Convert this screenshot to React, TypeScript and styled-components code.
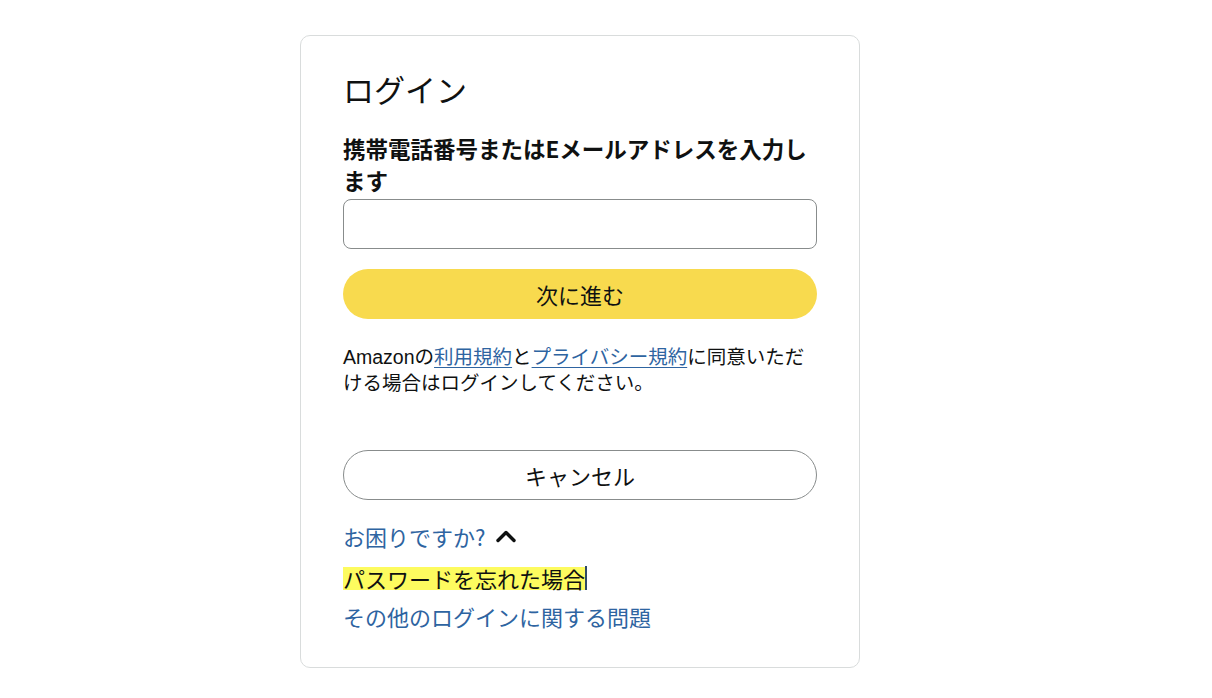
import * as React from "react";
import styled, { createGlobalStyle } from "styled-components";

const GlobalStyle = createGlobalStyle`
    * {
        box-sizing: border-box;
    }

    body {
        margin: 0;
        background: #ffffff;
        color: #0f1111;
        font-family: "Liberation Sans", "Noto Sans CJK JP", sans-serif;
    }
`;

const ChevronUp = (): JSX.Element => (
    <svg width="22" height="14" viewBox="0 0 22 14" fill="none">
        <polyline points="3,11.5 11,3.5 19,11.5" stroke="#0f1111" strokeWidth="3.4" strokeLinecap="round" strokeLinejoin="round"/>
    </svg>
);

const App = (): JSX.Element => (
    <Page>
        <GlobalStyle/>
        <Card>
            <Title>ログイン</Title>
            <Label htmlFor="email">携帯電話番号またはEメールアドレスを入力します</Label>
            <Input id="email" type="text"/>
            <PillButton $primary>次に進む</PillButton>
            <Legal>
                Amazonの<TextLink href="#">利用規約</TextLink>と<TextLink href="#">プライバシー規約</TextLink>に同意いただける場合はログインしてください。
            </Legal>
            <PillButton $spaced>キャンセル</PillButton>
            <Help>
                <HelpToggle>
                    お困りですか?
                    <ChevronUp/>
                </HelpToggle>
                <HelpItem>
                    <Marked>パスワードを忘れた場合</Marked>
                    <Caret/>
                </HelpItem>
                <HelpItem>
                    <HelpLink href="#">その他のログインに関する問題</HelpLink>
                </HelpItem>
            </Help>
        </Card>
    </Page>
);

export default App;


const Page = styled.div`
    padding: 35px 0 0 300px;
    min-height: 698px;
`;

const Card = styled.div`
    width: 560px;
    border: 1px solid #d9dcdc;
    border-radius: 10px;
    padding: 35px 42px 36px;
    display: flex;
    flex-direction: column;
`;

const Title = styled.h1`
    margin: 0;
    font-family: "Noto Sans CJK JP", sans-serif;
    font-weight: 400;
    font-size: 31px;
    line-height: 36px;
`;

const Label = styled.label`
    margin-top: 25px;
    font-family: "Noto Sans CJK JP", sans-serif;
    font-weight: 700;
    font-size: 22.5px;
    line-height: 32px;
`;

const Input = styled.input`
    margin-top: 3px;
    width: 100%;
    height: 50px;
    border: 1px solid #888c8c;
    border-radius: 8px;
    padding: 0 12px;
    font-size: 20px;
    outline: none;
`;

const PillButton = styled.button<{ $primary?: boolean; $spaced?: boolean }>`
    margin-top: ${p => (p.$spaced ? "54px" : "20px")};
    width: 100%;
    height: 50px;
    border-radius: 25px;
    border: ${p => (p.$primary ? "none" : "1px solid #888c8c")};
    background: ${p => (p.$primary ? "#f8da4e" : "#ffffff")};
    color: #0f1111;
    font-family: "Noto Sans CJK JP", sans-serif;
    font-size: 22px;
    cursor: pointer;
`;

const Legal = styled.p`
    margin: 25px 0 0;
    font-family: "Liberation Sans", "Noto Sans CJK JP", sans-serif;
    font-size: 19.5px;
    line-height: 26px;
`;

const TextLink = styled.a`
    color: #2e64a1;
    text-decoration: underline;
    text-underline-offset: 3px;
`;

const Help = styled.div`
    margin-top: 21px;
    display: flex;
    flex-direction: column;
    gap: 8px;
    font-family: "Noto Sans CJK JP", sans-serif;
    font-size: 22px;
    line-height: 30px;
`;

const HelpToggle = styled.div`
    display: flex;
    align-items: center;
    gap: 10px;
    height: 30px;
    color: #2e64a1;
    margin-bottom: 4px;
`;

const HelpItem = styled.div`
    display: flex;
    align-items: center;
    height: 30px;
`;

const Marked = styled.span`
    display: inline-block;
    background: #fdfb5f;
    color: #0f1111;
    line-height: 23px;
`;

const Caret = styled.span`
    display: inline-block;
    width: 2px;
    height: 24px;
    background: #2f4a66;
`;

const HelpLink = styled.a`
    color: #2e64a1;
    text-decoration: none;
`;
